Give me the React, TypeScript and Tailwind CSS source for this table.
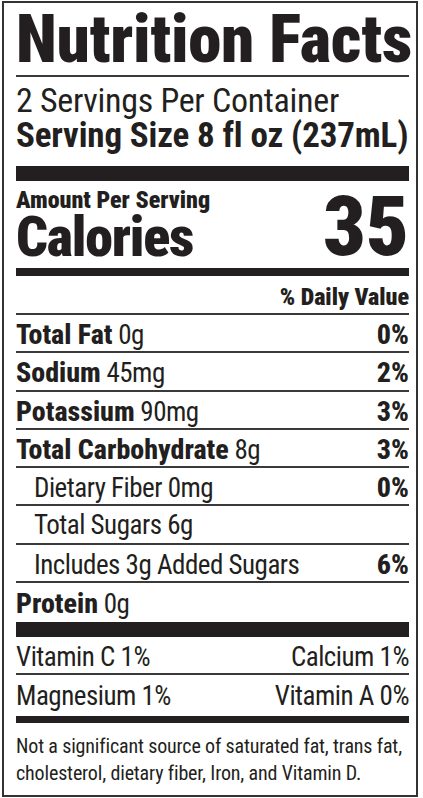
import React from "react";

type Row = {
  label: string;
  amount?: string;
  dv?: string;
  bold?: boolean;
  indent?: boolean;
};

const rows: Row[] = [
  { label: "Total Fat", amount: "0g", dv: "0%", bold: true },
  { label: "Sodium", amount: "45mg", dv: "2%", bold: true },
  { label: "Potassium", amount: "90mg", dv: "3%", bold: true },
  { label: "Total Carbohydrate", amount: "8g", dv: "3%", bold: true },
  { label: "Dietary Fiber 0mg", dv: "0%", indent: true },
  { label: "Total Sugars 6g", indent: true },
  { label: "Includes 3g Added Sugars", dv: "6%", indent: true },
];

const NutrientRow: React.FC<Row> = ({ label, amount, dv, bold, indent }) => {
  return (
    <>
      <div
        className={`flex h-[36.3px] items-baseline justify-between pt-[3px] leading-[33.3px] ${
          indent ? "pl-[18px]" : ""
        }`}
      >
        <span className="whitespace-nowrap text-[27px] tracking-[-0.5px]">
          {bold ? (
            <span className="text-[28px] font-extrabold tracking-normal">{label}</span>
          ) : (
            label
          )}
          {amount ? <> {amount}</> : null}
        </span>
        {dv ? <span className="text-[28px] font-extrabold">{dv}</span> : null}
      </div>
      <div className="h-[2px] bg-[#3a3a3a]" />
    </>
  );
};

export default function App() {
  return (
    <div className="h-[798px] w-[423px] bg-white pl-[2px] pt-[1px] text-[#231f20] [font-family:Roboto,'Liberation_Sans',sans-serif] [font-stretch:75%]">
      <div className="flex h-[796px] w-[416px] flex-col border-2 border-[#333] pl-3 pr-[7px]">
        {/* title */}
        <div className="mt-[1px] h-[71px] whitespace-nowrap text-[67px] font-black leading-[71px] tracking-[-0.25px]">
          Nutrition Facts
        </div>
        <div className="h-[2px] bg-[#3a3a3a]" />

        {/* servings */}
        <div className="mt-[6px] h-[35px] whitespace-nowrap text-[34px] leading-[35px] tracking-[-0.3px]">
          2 Servings Per Container
        </div>
        <div className="h-[36px] whitespace-nowrap text-[35px] font-bold leading-[36px] tracking-[-0.15px]">
          Serving Size 8 fl oz (237mL)
        </div>
        <div className="mt-[12px] h-[15px] bg-[#231f20]" />

        {/* calories */}
        <div className="mt-[7px] flex items-end justify-between">
          <div className="flex flex-col">
            <div className="h-[24px] whitespace-nowrap text-[24px] font-black leading-[24px]">
              Amount Per Serving
            </div>
            <div className="h-[50px] text-[56px] font-black leading-[50px] tracking-[-1.2px]">
              Calories
            </div>
          </div>
          <div className="text-[84px] font-black leading-[70px]">35</div>
        </div>
        <div className="mt-[6px] h-[8px] bg-[#231f20]" />

        <div className="mt-[9px] h-[24px] text-right text-[24px] font-black leading-[24px]">
          % Daily Value
        </div>
        <div className="mt-[4px] h-[2px] bg-[#3a3a3a]" />

        {/* nutrients */}
        {rows.map((r) => (
          <NutrientRow key={r.label} {...r} />
        ))}
        <div className="h-[39px] pt-[4px] text-[27px] leading-[33.3px] tracking-[-0.5px]">
          <span className="text-[28px] font-extrabold tracking-normal">Protein</span> 0g
        </div>
        <div className="h-[15px] bg-[#231f20]" />

        {/* vitamins */}
        <div className="flex h-[36px] justify-between pt-[3px] text-[27px] leading-[34px] tracking-[-0.5px]">
          <span>Vitamin C 1%</span>
          <span>Calcium 1%</span>
        </div>
        <div className="h-[2px] bg-[#3a3a3a]" />
        <div className="flex h-[41px] justify-between pt-[4px] text-[27px] leading-[34px] tracking-[-0.5px]">
          <span>Magnesium 1%</span>
          <span>Vitamin A 0%</span>
        </div>
        <div className="h-[7px] bg-[#231f20]" />

        {/* footnote */}
        <div className="mt-[10px] whitespace-nowrap text-[20px] leading-[27px] tracking-[-0.15px]">
          Not a significant source of saturated fat, trans fat,
          <br />
          cholesterol, dietary fiber, Iron, and Vitamin D.
        </div>
      </div>
    </div>
  );
}
